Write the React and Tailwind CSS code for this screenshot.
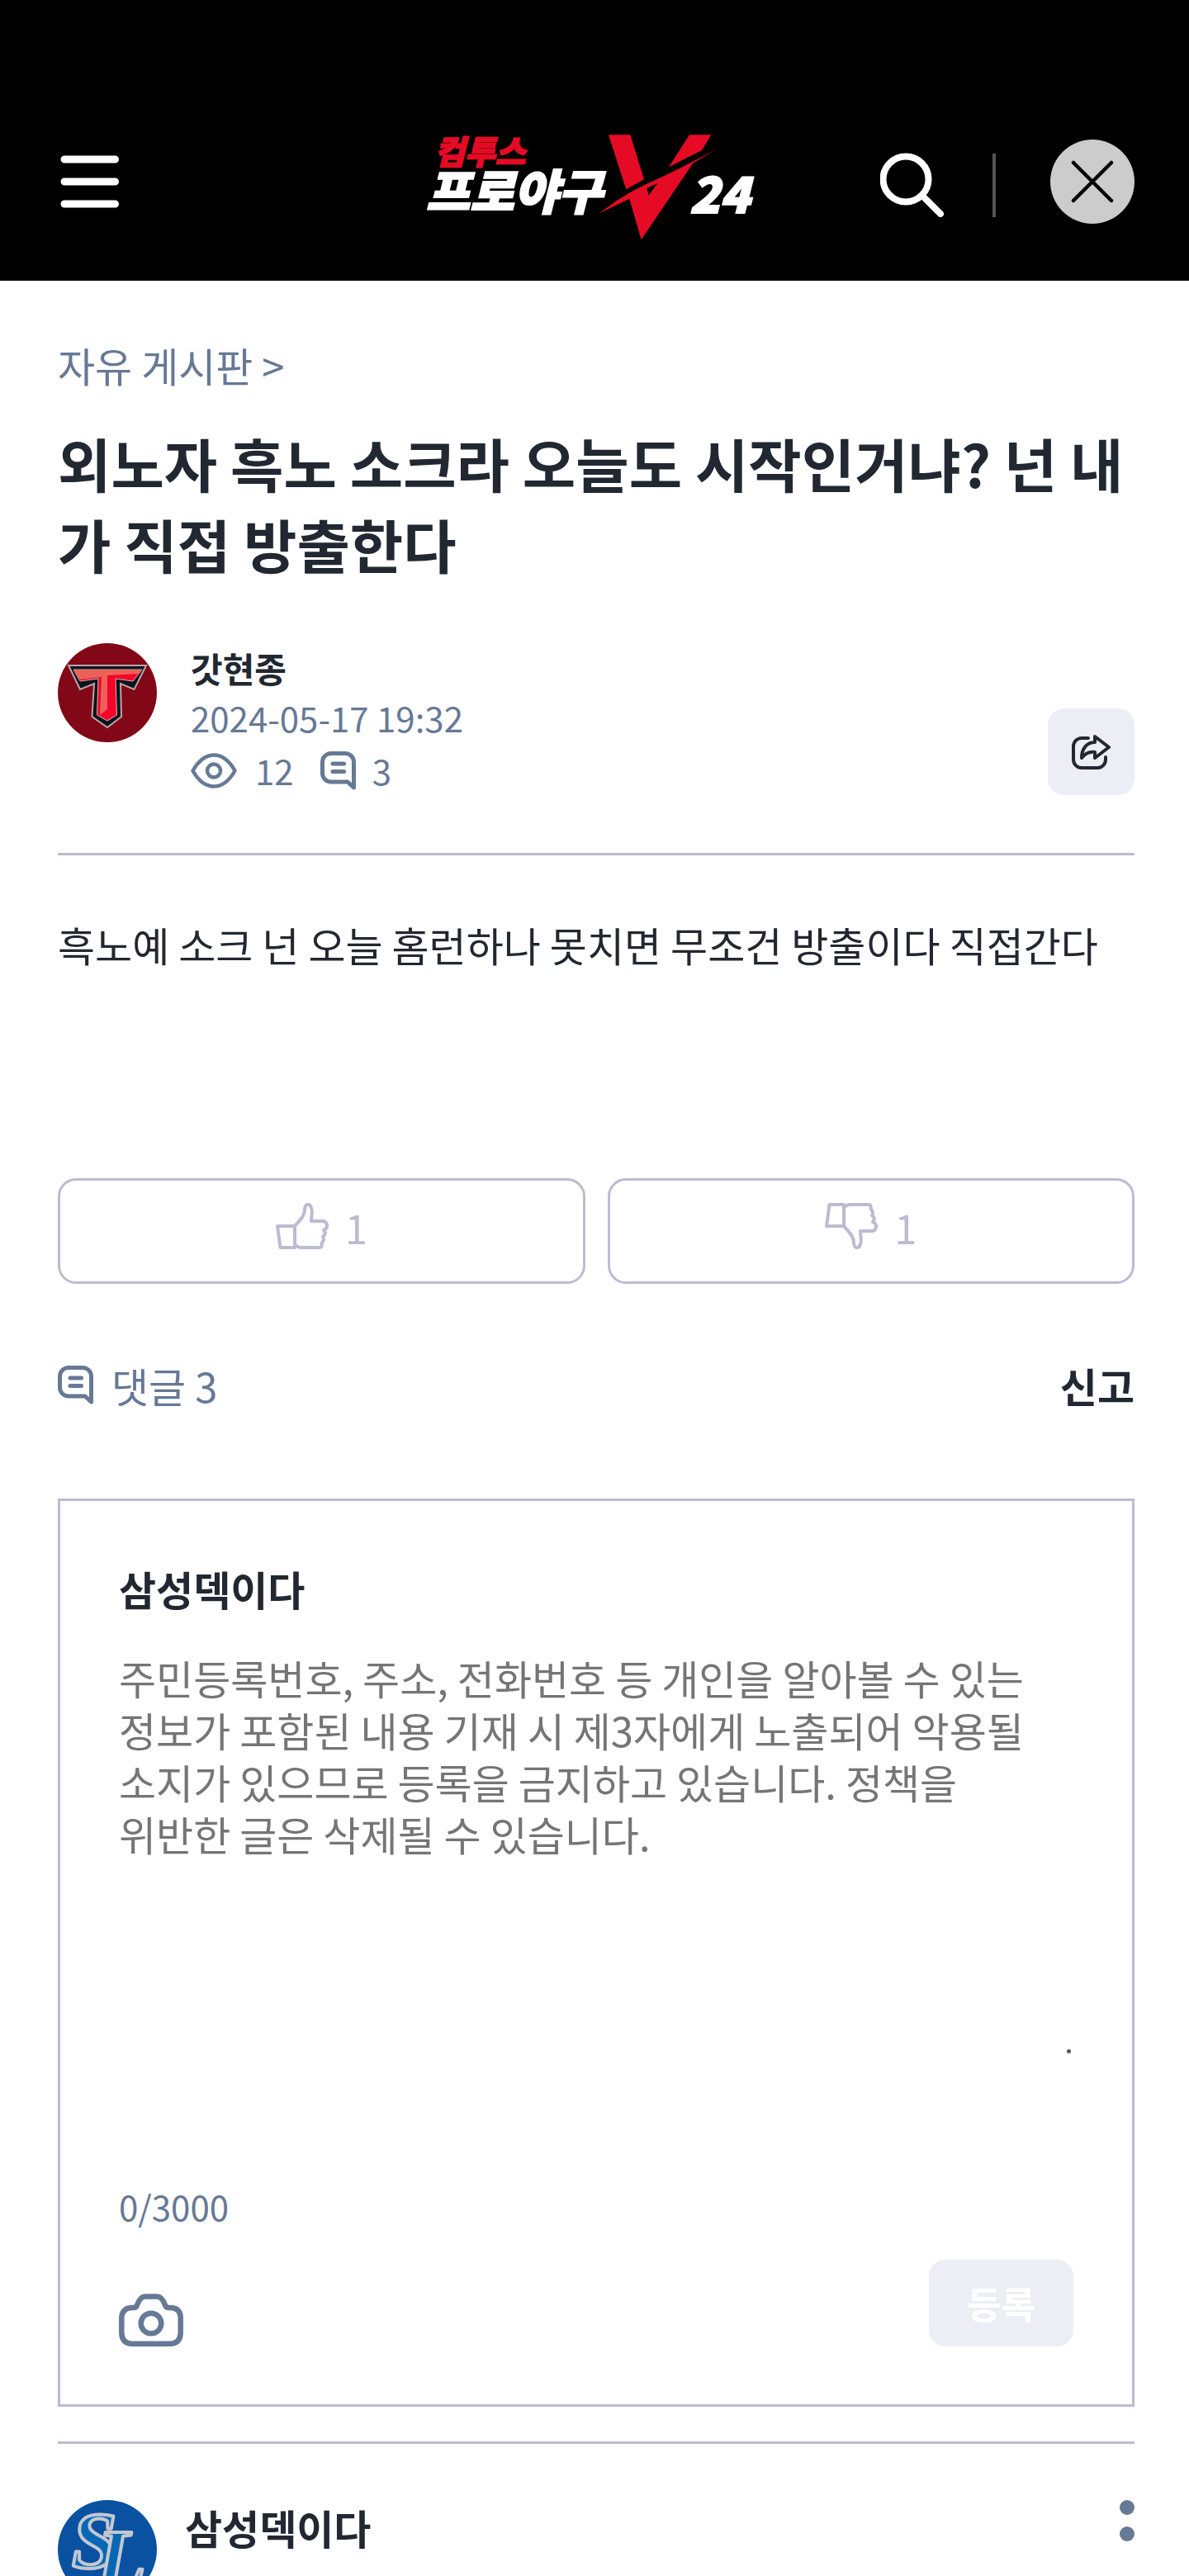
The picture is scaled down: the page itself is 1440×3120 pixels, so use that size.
import React, { useState } from 'react';

const POLICY_NOTICE =
  '주민등록번호, 주소, 전화번호 등 개인을 알아볼 수 있는 정보가 포함된 내용 기재 시 제3자에게 노출되어 악용될 소지가 있으므로 등록을 금지하고 있습니다. 정책을 위반한 글은 삭제될 수 있습니다.';

const MAX_LENGTH = 3000;

const MenuIcon = () => (
  <svg className="h-16 w-[76px]" viewBox="0 0 76 64" stroke="#fff" strokeWidth="9" strokeLinecap="round">
    <path d="M8 5h61.5M8 32h61.5M8 59h61.5" />
  </svg>
);

const SearchIcon = () => (
  <svg className="h-[78px] w-[78px]" viewBox="0 0 78 78" fill="none" stroke="#fff" strokeWidth="8">
    <circle cx="31" cy="32" r="27.5" />
    <path d="M51 52l22 22" strokeLinecap="round" />
  </svg>
);

const CloseIcon = () => (
  <svg className="h-[52px] w-[52px]" viewBox="0 0 52 52" stroke="#000" strokeWidth="4.5" strokeLinecap="round">
    <path d="M3 3l46 46M49 3L3 49" />
  </svg>
);

const Logo = () => (
  <svg
    className="h-[148px] w-[432px] font-['Noto_Sans_CJK_KR',sans-serif] font-black italic"
    viewBox="-12 -14 432 148"
    role="img"
    aria-label="컴투스 프로야구 V24"
  >
    <text x="8" y="39" fontSize="40" fill="#e50b24" stroke="#e50b24" strokeWidth="1.5">컴투스</text>
    <text x="-2" y="94" fontSize="58" fill="#fff" stroke="#fff" strokeWidth="2">프로야구</text>
    <g transform="translate(-18 -20) scale(0.3333)" fill="#e50b24">
      <path d="M711 70H790L840 232L775 268Z" />
      <path d="M1005 70H1084L1050 126L930 187Z" />
      <path
        fillRule="evenodd"
        d="M1106 120L1017 174L830 451L787 302L678 355Q760 290 850 248Q960 200 1106 120ZM850 264L889 246L857 290Z"
      />
    </g>
    <text x="317" y="98" fontSize="60" fill="#fff" stroke="#fff" strokeWidth="2">24</text>
  </svg>
);

const EyeIcon = () => (
  <svg className="h-[43px] w-14" viewBox="0 0 56 43" fill="none" stroke="currentColor" strokeWidth="4.5">
    <path
      strokeLinejoin="round"
      d="M2.5 21.5C9 10 18 2.5 28 2.5S47 10 53.5 21.5C47 33 38 40.5 28 40.5S9 33 2.5 21.5Z"
    />
    <circle cx="28" cy="21.5" r="8" />
  </svg>
);

const CommentIcon = () => (
  <svg className="h-[47px] w-[43px]" viewBox="0 0 43 47" fill="none" stroke="currentColor" strokeWidth="5">
    <path
      strokeLinejoin="round"
      d="M13 2.5H30A10.5 10.5 0 0 1 40.5 13V44L33 37H13A10.5 10.5 0 0 1 2.5 26.5V13A10.5 10.5 0 0 1 13 2.5Z"
    />
    <path strokeLinecap="round" d="M15 15H28.5M15 24.5H28.5" />
  </svg>
);

const ShareIcon = () => (
  <svg
    className="h-[42px] w-[47px]"
    viewBox="0 0 47 42"
    fill="none"
    stroke="#222831"
    strokeWidth="4"
    strokeLinecap="round"
    strokeLinejoin="round"
  >
    <path d="M20 4H12A10 10 0 0 0 2 14V30A10 10 0 0 0 12 40H31A10 10 0 0 0 41 30V27" />
    <path d="M28 2L45 15L28 28V21C21 20 16 23 12 28C12 17 18 9 28 9Z" />
  </svg>
);

const ThumbIcon = ({ down }) => (
  <svg className="h-14 w-16" viewBox="0 0 64 56" fill="none" stroke="currentColor" strokeWidth="4">
    <g transform={down ? 'translate(0 56) scale(1 -1)' : undefined} strokeLinejoin="round">
      <path d="M2 28H23V54H5.5Z" />
      <path d="M23 28C28 22 35 16 35 9C35 0 41 0 43 6C45 11 43 16 43 22H57C62 22 63 28 61 31L58 33Q61 36 59 39L57 41Q59 44 57 47L55.5 49Q56.5 54 53 54H31Q26 54 23 50" />
    </g>
  </svg>
);

const CameraIcon = () => (
  <svg className="h-16 w-[78px]" viewBox="0 0 78 64" fill="none" stroke="currentColor" strokeWidth="6.5">
    <path
      strokeLinejoin="round"
      d="M15 17H18Q21 17 22 14C24 8 27 3.5 32 3.5H46C51 3.5 54 8 56 14Q57 17 60 17H63Q74.7 18 74.7 29V48Q74 60 63 60.7H15Q4 60 3.3 48V29Q4 18 15 17Z"
    />
    <circle cx="39" cy="36" r="12.3" />
  </svg>
);

const TigersAvatar = () => (
  <svg className="h-[120px] w-[120px] shrink-0" viewBox="0 0 120 120" aria-hidden="true">
    <circle cx="60" cy="60" r="60" fill="#820817" />
    <path
      d="M13 27H107L92.5 56L76 49L77 89L60 102L41.5 89L44 49L27 56Z"
      fill="#0b141c"
      stroke="#b9a5a8"
      strokeWidth="2"
    />
    <path d="M19 32H102L91 46L70 43L71.5 87L60 94L47.5 87L49 43L27 46Z" fill="#f3052b" stroke="#d9b5b2" strokeWidth="1" />
    <path d="M19 32H102L98 37L60 39V80L51 87L53 41L27 44Z" fill="#ee6158" />
  </svg>
);

const LionsAvatar = () => (
  <svg
    className="h-[120px] w-[120px] shrink-0 font-['Liberation_Serif',serif] font-bold italic"
    viewBox="0 0 120 120"
    aria-hidden="true"
  >
    <circle cx="60" cy="60" r="60" fill="#0a51a1" />
    <g fill="#0668b5" stroke="#c3c7d0" strokeWidth="4" strokeLinejoin="round">
      <text x="17" y="82" fontSize="98">S</text>
      <text x="47" y="103" fontSize="98">L</text>
    </g>
  </svg>
);

const Header = () => (
  <header className="grid grid-cols-[1fr_auto_1fr] items-center bg-black pb-[46px] pl-[70px] pr-[66px] pt-[146px]">
    <button type="button" aria-label="메뉴" className="justify-self-start">
      <MenuIcon />
    </button>
    <a href="#home">
      <Logo />
    </a>
    <div className="flex items-center justify-end">
      <div className="flex items-center gap-[58px] pt-2">
        <button type="button" aria-label="검색">
          <SearchIcon />
        </button>
        <span className="h-[77px] w-1 bg-[#555555]" />
      </div>
      <button
        type="button"
        aria-label="닫기"
        className="ml-[66px] flex h-[102px] w-[102px] items-center justify-center rounded-full bg-[#cccccc]"
      >
        <CloseIcon />
      </button>
    </div>
  </header>
);

const VoteButton = ({ down, label }) => {
  const [voted, setVoted] = useState(false);

  return (
    <button
      type="button"
      aria-label={label}
      aria-pressed={voted}
      onClick={() => setVoted(!voted)}
      className="flex h-32 flex-1 items-center justify-center gap-5 rounded-[22px] border-3 border-[#bcbcd0] pb-3 text-[49px] leading-[63px] text-[#bcbcd0]"
    >
      <ThumbIcon down={down} />
      <span>1</span>
    </button>
  );
};

const CommentForm = () => {
  const [comment, setComment] = useState('');

  return (
    <form
      className="mt-[106px] border-3 border-[#bcbcd0] px-[71px] pb-[70px] pt-[74px]"
      onSubmit={(e) => e.preventDefault()}
    >
      <label htmlFor="comment" className="block text-[49px] font-bold leading-[63px]">
        삼성덱이다
      </label>
      <div className="relative mt-[45px]">
        <textarea
          id="comment"
          className="block h-[490px] w-full resize-none break-keep text-[49px] leading-[63px] outline-none placeholder:text-[#757575]"
          placeholder={POLICY_NOTICE}
          value={comment}
          onChange={(e) => setComment(e.target.value)}
          maxLength={MAX_LENGTH}
        />
        <span className="absolute bottom-[3px] right-[3px] h-[5px] w-[5px] rounded-full bg-[#555555]" />
      </div>
      <p className="mt-[152px] text-[42px] leading-[60px] text-[#667995]">
        {comment.length}/{MAX_LENGTH}
      </p>
      <div className="mt-[35px] flex items-end justify-between">
        <button type="button" aria-label="사진 첨부" className="text-[#667995]">
          <CameraIcon />
        </button>
        <button
          type="submit"
          disabled={!comment.trim()}
          className="h-[105px] w-[175px] rounded-[20px] bg-[#ededf6] text-[45px] font-bold text-white"
        >
          등록
        </button>
      </div>
    </form>
  );
};

export default function App() {
  return (
    <div className="h-screen overflow-hidden bg-white font-['Noto_Sans_CJK_KR',sans-serif] text-[#222831]">
      <Header />

      <main className="pl-[70px] pr-[66px] pt-[70px]">
        <a href="#board" className="block text-[49px] leading-[63px] text-[#667995]">
          자유 게시판 &gt;
        </a>
        <h1 className="mt-[39px] text-[70px] font-bold leading-[98px]">
          외노자 흑노 소크라 오늘도 시작인거냐? 넌 내가 직접 방출한다
        </h1>

        {/* Author, date and counters */}
        <div className="mt-[71px] flex items-start border-b-3 border-[#bcbcd0] pb-[70px]">
          <TigersAvatar />
          <div className="ml-[41px] text-[42px] leading-[60px] text-[#667995]">
            <p className="font-bold text-[#222831]">갓현종</p>
            <p>2024-05-17 19:32</p>
            <div className="mt-1 flex items-center">
              <EyeIcon />
              <span className="ml-[22px]">12</span>
              <span className="ml-8">
                <CommentIcon />
              </span>
              <span className="ml-5">3</span>
            </div>
          </div>
          <button
            type="button"
            aria-label="공유"
            className="ml-auto flex h-[105px] w-[105px] items-center justify-center self-end rounded-[20px] bg-[#ededf6]"
          >
            <ShareIcon />
          </button>
        </div>

        <p className="mt-[76px] text-[49px] leading-[63px]">
          흑노예 소크 넌 오늘 홈런하나 못치면 무조건 방출이다 직접간다
        </p>

        <div className="mt-[252px] flex gap-[27px]">
          <VoteButton label="추천" />
          <VoteButton label="비추천" down />
        </div>

        <div className="mt-[91px] flex items-center text-[49px] leading-[63px]">
          <span className="text-[#667995]">
            <CommentIcon />
          </span>
          <span className="ml-[22px] text-[#667995]">댓글 3</span>
          <button type="button" className="ml-auto font-bold">
            신고
          </button>
        </div>

        <CommentForm />

        {/* Comments */}
        <ul className="mt-[42px] border-t-3 border-[#bcbcd0]">
          <li className="flex items-start pt-[68px]">
            <LionsAvatar />
            <p className="ml-[34px] text-[49px] font-bold leading-[66px]">삼성덱이다</p>
            <button type="button" aria-label="더보기" className="ml-auto flex flex-col gap-[14px]">
              <span className="h-[18px] w-[18px] rounded-full bg-[#667995]" />
              <span className="h-[18px] w-[18px] rounded-full bg-[#667995]" />
            </button>
          </li>
        </ul>
      </main>
    </div>
  );
}
